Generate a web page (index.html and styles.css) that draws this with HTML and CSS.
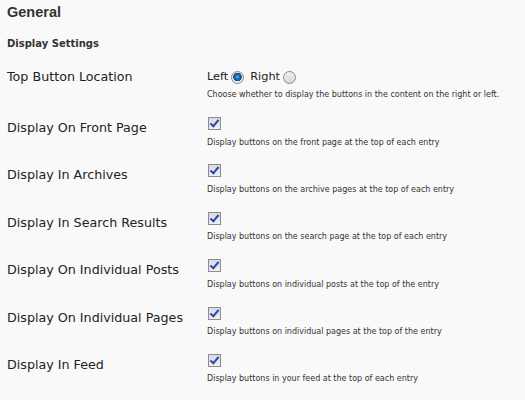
FILE: index.html
```html
<!DOCTYPE html>
<html lang="en">
<head>
    <meta charset="UTF-8">
    <title>General</title>
    <link rel="stylesheet" href="styles.css">
</head>
<body>
<div class="wrap">
    <h2 class="title">General</h2>
    <h3 class="subtitle">Display Settings</h3>

    <div class="row row-first">
        <div class="row-label">Top Button Location</div>
        <div class="row-field">
            <div class="radios">
                <span>Left</span><span class="radio checked"></span>
                <span>Right</span><span class="radio"></span>
            </div>
            <div class="desc">Choose whether to display the buttons in the content on the right or left.</div>
        </div>
    </div>

    <div class="row">
        <div class="row-label">Display On Front Page</div>
        <div class="row-field">
            <span class="check"></span>
            <div class="desc">Display buttons on the front page at the top of each entry</div>
        </div>
    </div>

    <div class="row">
        <div class="row-label">Display In Archives</div>
        <div class="row-field">
            <span class="check"></span>
            <div class="desc">Display buttons on the archive pages at the top of each entry</div>
        </div>
    </div>

    <div class="row">
        <div class="row-label">Display In Search Results</div>
        <div class="row-field">
            <span class="check"></span>
            <div class="desc">Display buttons on the search page at the top of each entry</div>
        </div>
    </div>

    <div class="row">
        <div class="row-label">Display On Individual Posts</div>
        <div class="row-field">
            <span class="check"></span>
            <div class="desc">Display buttons on individual posts at the top of the entry</div>
        </div>
    </div>

    <div class="row">
        <div class="row-label">Display On Individual Pages</div>
        <div class="row-field">
            <span class="check"></span>
            <div class="desc">Display buttons on individual pages at the top of the entry</div>
        </div>
    </div>

    <div class="row">
        <div class="row-label">Display In Feed</div>
        <div class="row-field">
            <span class="check"></span>
            <div class="desc">Display buttons in your feed at the top of each entry</div>
        </div>
    </div>
</div>
</body>
</html>
```

FILE: styles.css
```css
html, body {
    margin: 0;
    padding: 0;
    background: #f9f9f9;
}

.wrap {
    padding: 0 7px;
    font-family: "DejaVu Sans", Verdana, sans-serif;
    color: #333;
}

.title {
    margin: 0;
    padding-top: 3px;
    font-family: "Liberation Sans", Arial, sans-serif;
    font-size: 14.5px;
    line-height: 18px;
    color: #333;
}

.subtitle {
    margin: 16px 0 0;
    font-size: 10px;
    line-height: 14px;
    color: #333;
}

.row {
    display: flex;
    height: 47.4px;
}

.row-first {
    margin-top: 12px;
    height: 46px;
}

.row-label {
    width: 200px;
    padding-top: 11px;
    font-size: 12.7px;
    line-height: 16px;
    color: #222;
}

.row-first .row-label {
    padding-top: 6px;
}

.row-field {
    padding-top: 8px;
}

.row-first .row-field {
    padding-top: 6px;
}

.radios {
    display: flex;
    align-items: center;
    gap: 3px;
    font-size: 11.3px;
    line-height: 16px;
    color: #222;
}

.radios .radio + span {
    margin-left: 3px;
}

.radio {
    width: 11px;
    height: 11px;
    border: 1px solid #8a8a8a;
    border-radius: 50%;
    background: linear-gradient(#f0f0f0, #d8d8d8);
}

.radio.checked {
    background: radial-gradient(circle at 50% 45%, #6ab4e8 0, #1e6fb4 2px, #0b4f8a 4px, #dfe6ec 4.5px, #eef2f5 100%);
}

.check {
    display: block;
    width: 11px;
    height: 11px;
    margin-left: 1px;
    border: 1px solid #8c8c8c;
    background: linear-gradient(#d6dbe6, #eef0f5);
    position: relative;
}

.check::after {
    content: "";
    position: absolute;
    left: 3px;
    top: 0;
    width: 3px;
    height: 7px;
    border: solid #3346a8;
    border-width: 0 2px 2px 0;
    transform: rotate(40deg);
}

.desc {
    margin-top: 7.5px;
    font-size: 8px;
    line-height: 10px;
    color: #333;
}

.row-first .desc {
    margin-top: 5px;
}
```
